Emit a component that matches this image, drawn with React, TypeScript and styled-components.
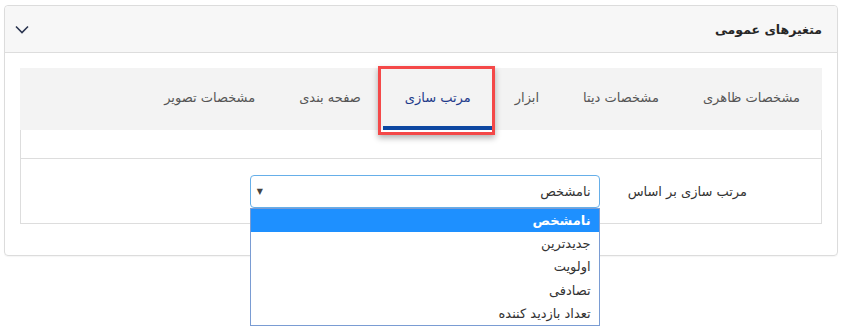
import React from "react";
import styled, { createGlobalStyle, css } from "styled-components";

const Global = createGlobalStyle`
  html, body { margin: 0; padding: 0; background: #fff; }
  body { font-family: "DejaVu Sans", "Noto Sans", sans-serif; color: #333; }
  * { box-sizing: border-box; }
`;

const Page = styled.div`
  padding: 5px 5px 0 4px;
  width: 843px;
  height: 330px;
`;

const Panel = styled.section`
  border: 1px solid #dcdcdc;
  border-radius: 4px;
  height: 251px;
  direction: rtl;
  box-shadow: 0 1px 1px rgba(0, 0, 0, 0.04);
`;

const Header = styled.header`
  height: 47px;
  background: #f7f7f7;
  border-bottom: 1px solid #dddddd;
  border-radius: 4px 4px 0 0;
  display: flex;
  align-items: center;
  justify-content: space-between;
  padding: 0 15px 0 10px;
`;

const Title = styled.h3`
  margin: 0;
  font-size: 12.5px;
  font-weight: bold;
  color: #262626;
`;

const Body = styled.div`
  padding: 15px 15px 0 15px;
`;

const TabBar = styled.nav`
  height: 62px;
  background: #f3f3f3;
  display: flex;
  align-items: stretch;
  padding-right: 0;
`;

const Tab = styled.div<{ $active?: boolean }>`
  position: relative;
  display: flex;
  align-items: center;
  padding: 0 22px 4px 22px;
  font-size: 13px;
  color: #555;
  white-space: nowrap;
  ${(p) =>
    p.$active &&
    css`
      color: #1d3a8a;
      border-bottom: 4px solid #0d47a1;
      padding-bottom: 0;
      &::after {
        content: "";
        position: absolute;
        top: -2px;
        bottom: -9px;
        left: -5px;
        right: -2px;
        border: 3px solid #f44848;
        box-shadow: 0 3px 6px rgba(0, 0, 0, 0.3);
        pointer-events: none;
      }
    `}
`;

const Content = styled.div`
  border: 1px solid #dddddd;
  border-top: none;
`;

const Spacer = styled.div`
  height: 29px;
  border-bottom: 1px solid #dddddd;
`;

const FormRow = styled.div`
  height: 64px;
  display: flex;
  align-items: center;
  padding-right: 74px;
  gap: 28px;
`;

const Label = styled.label`
  font-size: 13px;
  color: #333;
  white-space: nowrap;
`;

const SelectWrap = styled.div`
  position: relative;
  width: 350px;
`;

const SelectBox = styled.div`
  height: 33px;
  border: 1px solid #66afe9;
  border-radius: 4px;
  display: flex;
  align-items: center;
  justify-content: space-between;
  padding: 0 8px 0 6px;
  font-size: 13px;
  color: #333;
  background: #fff;
`;

const Arrow = styled.span`
  font-size: 8px;
  color: #444;
`;

const List = styled.ul`
  position: absolute;
  top: 33px;
  left: 0;
  right: 0;
  margin: 0;
  padding: 0;
  list-style: none;
  border: 1px solid #7a9cd3;
  background: #fff;
  z-index: 2;
`;

const Item = styled.li<{ $selected?: boolean }>`
  height: 23.4px;
  display: flex;
  align-items: center;
  padding: 0 8px;
  font-size: 13px;
  color: #333;
  ${(p) =>
    p.$selected &&
    css`
      background: #1e90ff;
      color: #fff;
      font-weight: bold;
    `}
`;

const Chevron = () => (
  <svg width="14" height="9" viewBox="0 0 14 9" fill="none">
    <path d="M1 1.5 L7 7.5 L13 1.5" stroke="#2b3550" strokeWidth="1.6" />
  </svg>
);

const tabs = [
  "مشخصات ظاهری",
  "مشخصات دیتا",
  "ابزار",
  "مرتب سازی",
  "صفحه بندی",
  "مشخصات تصویر",
];

const options = ["نامشخص", "جدیدترین", "اولویت", "تصادفی", "تعداد بازدید کننده"];

export default function App() {
  return (
    <>
      <Global />
      <Page>
        <Panel>
          <Header>
            <Title>متغیرهای عمومی</Title>
            <Chevron />
          </Header>
          <Body>
            <TabBar>
              {tabs.map((t) => (
                <Tab key={t} $active={t === "مرتب سازی"}>
                  {t}
                </Tab>
              ))}
            </TabBar>
            <Content>
              <Spacer />
              <FormRow>
                <Label>مرتب سازی بر اساس</Label>
                <SelectWrap>
                  <SelectBox>
                    <span>نامشخص</span>
                    <Arrow>▼</Arrow>
                  </SelectBox>
                  <List>
                    {options.map((o, i) => (
                      <Item key={o} $selected={i === 0}>
                        {o}
                      </Item>
                    ))}
                  </List>
                </SelectWrap>
              </FormRow>
            </Content>
          </Body>
        </Panel>
      </Page>
    </>
  );
}
